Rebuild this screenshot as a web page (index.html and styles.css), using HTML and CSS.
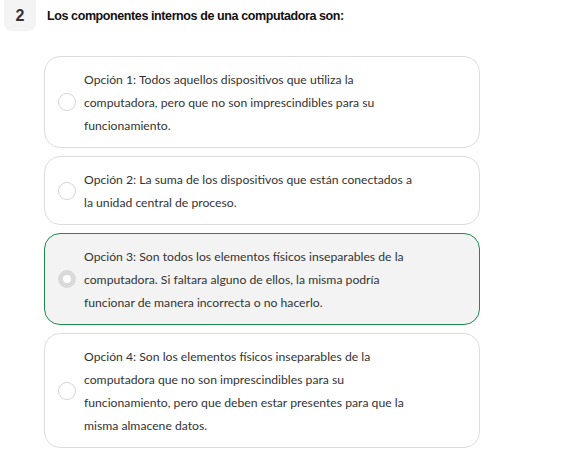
FILE: index.html
```html
<!DOCTYPE html>
<html lang="es">
<head>
<meta charset="utf-8">
<link rel="stylesheet" href="styles.css">
</head>
<body>
<div class="question">
  <div class="q-head">
    <div class="q-num">2</div>
    <div class="q-title">Los componentes internos de una computadora son:</div>
  </div>
  <div class="options">
    <label class="option">
      <span class="radio"></span>
      <span class="opt-text">Opción 1: Todos aquellos dispositivos que utiliza la computadora, pero que no son imprescindibles para su funcionamiento.</span>
    </label>
    <label class="option">
      <span class="radio"></span>
      <span class="opt-text">Opción 2: La suma de los dispositivos que están conectados a la unidad central de proceso.</span>
    </label>
    <label class="option selected">
      <span class="radio"></span>
      <span class="opt-text">Opción 3: Son todos los elementos físicos inseparables de la computadora. Si faltara alguno de ellos, la misma podría funcionar de manera incorrecta o no hacerlo.</span>
    </label>
    <label class="option">
      <span class="radio"></span>
      <span class="opt-text">Opción 4: Son los elementos físicos inseparables de la computadora que no son imprescindibles para su funcionamiento, pero que deben estar presentes para que la misma almacene datos.</span>
    </label>
  </div>
</div>
</body>
</html>
```
FILE: styles.css
```css
html, body {
  margin: 0;
  padding: 0;
  background: #ffffff;
}
.question {
  padding: 0 0 0 4px;
}
.q-head {
  display: flex;
  align-items: center;
  gap: 11px;
}
.q-num {
  width: 32px;
  height: 31px;
  background: #f4f4f4;
  border-radius: 0 0 8px 8px;
  display: flex;
  align-items: center;
  justify-content: center;
  font-family: "Liberation Sans", Arial, sans-serif;
  font-weight: bold;
  font-size: 16px;
  color: #333333;
}
.q-title {
  font-family: "Liberation Sans", Arial, sans-serif;
  font-weight: bold;
  font-size: 12.5px;
  letter-spacing: -0.4px;
  color: #111111;
}
.options {
  margin: 25px 0 0 40px;
  width: 436px;
  display: flex;
  flex-direction: column;
  gap: 8px;
}
.option {
  display: flex;
  align-items: center;
  gap: 8px;
  padding: 10.5px 14px 10.5px 13px;
  border: 1px solid #dddddd;
  border-radius: 16px;
  background: #ffffff;
}
.option.selected {
  border-color: #1e8a4c;
  background: #f3f3f3;
}
.radio {
  flex: none;
  width: 16px;
  height: 16px;
  border: 1px solid #d6d6d6;
  border-radius: 50%;
  background: #ffffff;
}
.option.selected .radio {
  width: 8px;
  height: 8px;
  border: 5px solid #d9d9d9;
}
.opt-text {
  width: 334px;
  font-family: Lato, "Open Sans", sans-serif;
  font-size: 12.2px;
  line-height: 23px;
  color: #333333;
}
```
